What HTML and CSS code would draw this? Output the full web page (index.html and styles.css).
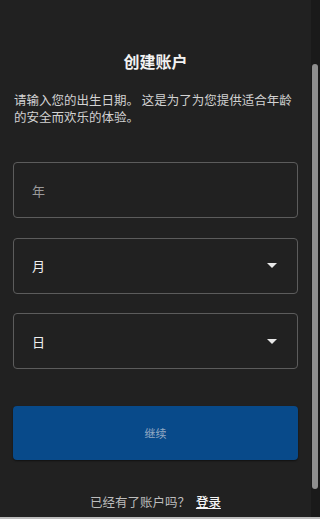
FILE: index.html
```html
<!DOCTYPE html>
<html lang="zh">
<head>
<meta charset="utf-8">
<link rel="stylesheet" href="styles.css">
</head>
<body>
<div class="frame">
  <main class="page">
    <h1 class="title">创建账户</h1>
    <p class="intro">请输入您的出生日期。 这是为了为您提供适合年龄的安全而欢乐的体验。</p>
    <div class="fields">
      <div class="field"><span class="placeholder">年</span></div>
      <div class="field"><span class="value">月</span><span class="caret"></span></div>
      <div class="field"><span class="value">日</span><span class="caret"></span></div>
    </div>
    <button class="continue">继续</button>
    <p class="login">已经有了账户吗？ <a class="login-link">登录</a></p>
  </main>
  <div class="scrollbar"><div class="thumb"></div></div>
</div>
<div class="bottom-line"></div>
</body>
</html>
```
FILE: styles.css
```css
html, body {
  margin: 0;
  padding: 0;
  background: #212121;
  font-family: "Noto Sans CJK SC", "Noto Sans", sans-serif;
  overflow: hidden;
}
.frame {
  display: flex;
  height: 517px;
}
.page {
  width: 311px;
  box-sizing: border-box;
  padding: 50px 13px 0 13px;
  display: flex;
  flex-direction: column;
}
.title {
  margin: 0;
  text-align: center;
  color: #f2f2f2;
  font-size: 16px;
  font-weight: 700;
  line-height: 22px;
}
.intro {
  margin: 19px 0 0 1px;
  color: #d2d2d2;
  font-size: 12.5px;
  line-height: 17px;
}
.fields {
  margin-top: 37px;
  display: flex;
  flex-direction: column;
  gap: 19.5px;
}
.field {
  height: 56px;
  box-sizing: border-box;
  border: 1px solid #5c5c5c;
  border-radius: 4px;
  display: flex;
  align-items: center;
  justify-content: space-between;
  padding: 0 20px 0 18px;
  font-size: 13px;
}
.placeholder { color: #9a9a9a; }
.value { color: #f0f0f0; }
.caret {
  width: 0;
  height: 0;
  border-left: 5px solid transparent;
  border-right: 5px solid transparent;
  border-top: 5px solid #e8e8e8;
}
.continue {
  margin-top: 37px;
  height: 54px;
  border: none;
  border-radius: 4px;
  background: #084a8a;
  color: #93a9c4;
  font-family: inherit;
  font-size: 11px;
  box-shadow: 0 1px 2px rgba(0,0,0,0.5);
}
.login {
  margin: 32px 0 0 0;
  text-align: center;
  color: #bdbdbd;
  font-size: 12.5px;
  line-height: 20px;
}
.login-link {
  color: #f5f5f5;
  font-weight: 500;
  text-decoration: underline;
  margin-left: 3px;
}
.scrollbar {
  width: 9px;
  background: #1a1a1a;
  padding-top: 64px;
  box-sizing: border-box;
}
.thumb {
  width: 6px;
  margin-left: 1px;
  height: 425px;
  background: #8f8f8f;
  border-radius: 3px;
}
.bottom-line {
  height: 2px;
  background: #bdbdbd;
}
```
